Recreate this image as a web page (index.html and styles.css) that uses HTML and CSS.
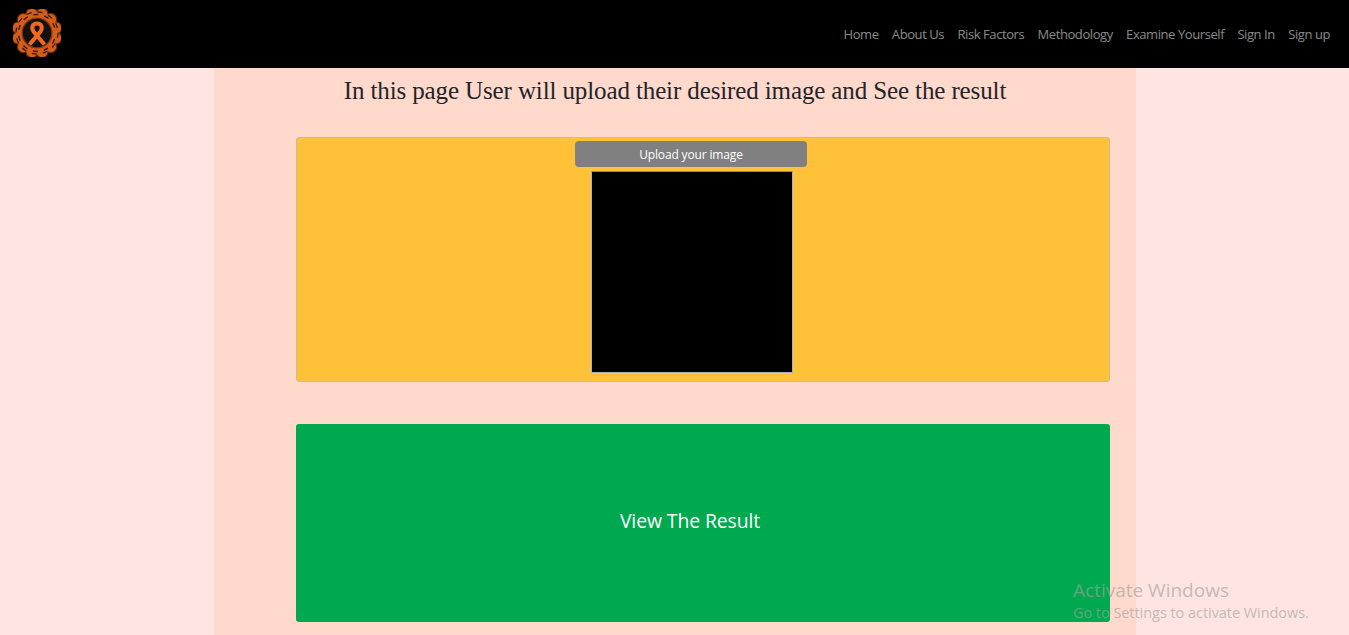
FILE: index.html
```html
<!DOCTYPE html>
<html lang="en">
<head>
<meta charset="utf-8">
<title>Upload</title>
<link rel="stylesheet" href="styles.css">
</head>
<body>
<nav class="navbar">
  <a class="brand" href="#" aria-label="Home">
    <svg class="logo" viewBox="0 0 48 48" width="48" height="48">
      <path d="M46 24A6 6 0 0 1 43.05 35A6 6 0 0 1 35 43.05A6 6 0 0 1 24 46A6 6 0 0 1 13 43.05A6 6 0 0 1 5 35A6 6 0 0 1 2 24A6 6 0 0 1 5 13A6 6 0 0 1 13 5A6 6 0 0 1 24 2A6 6 0 0 1 35 5A6 6 0 0 1 43.05 13A6 6 0 0 1 46 24Z" fill="#d65d19" stroke="#5a2a0c" stroke-width="1.2"/>
      <circle cx="24" cy="24" r="21" fill="none" stroke="#3a1a08" stroke-width="1.3" stroke-dasharray="5 6"/>
      <circle cx="24" cy="24" r="18.5" fill="none" stroke="#3a1a08" stroke-width="1.5" stroke-dasharray="5 6" stroke-dashoffset="5"/>
      <circle cx="24" cy="24" r="15.5" fill="#7a3a10"/>
      <circle cx="24" cy="24" r="14.2" fill="#14100e"/>
      <path d="M16.5 35.5 L27.5 22.5 C30 18.5 28.5 14.5 24 14.5 C19.5 14.5 18 18.5 20.5 22.5 L31.5 35.5" fill="none" stroke="#f26a1b" stroke-width="4"/>
    </svg>
  </a>
  <ul class="nav-links">
    <li><a href="#">Home</a></li>
    <li><a href="#">About Us</a></li>
    <li><a href="#">Risk Factors</a></li>
    <li><a href="#">Methodology</a></li>
    <li><a href="#">Examine Yourself</a></li>
    <li><a href="#">Sign In</a></li>
    <li><a href="#">Sign up</a></li>
  </ul>
</nav>
<main class="container">
  <h1 class="title">In this page User will upload their desired image and See the result</h1>
  <section class="upload-card">
    <button class="upload-btn" type="button">Upload your image</button>
    <div class="preview"></div>
  </section>
  <button class="result-card" type="button">View The Result</button>
</main>
<aside class="activate">
  <div class="activate-title">Activate Windows</div>
  <div class="activate-sub">Go to Settings to activate Windows.</div>
</aside>
</body>
</html>
```
FILE: styles.css
```css
* { box-sizing: border-box; }
html, body { margin: 0; height: 635px; overflow: hidden; }
body {
  background: #ffe4e1;
  font-family: "Open Sans", "Noto Sans", sans-serif;
}
.navbar {
  height: 68px;
  background: #000;
  display: flex;
  align-items: center;
  justify-content: space-between;
  padding: 0 19px 0 13px;
}
.brand { display: flex; }
.logo { display: block; margin-top: -2px; }
.nav-links {
  display: flex;
  gap: 13.3px;
  list-style: none;
  margin: 0 0 2px;
  padding: 0;
}
.nav-links a {
  color: rgba(255, 255, 255, 0.55);
  text-decoration: none;
  font-size: 13px;
  letter-spacing: -0.42px;
  line-height: 20px;
}
.container {
  width: 922px;
  height: 567px;
  padding: 0 26px 0 82px;
  margin-left: 214px;
  background: #ffd9cc;
  display: flex;
  flex-direction: column;
}
.title {
  margin: 8px 0 0 -82px;
  width: 922px;
  height: 61px;
  font-family: "Liberation Serif", serif;
  font-weight: 400;
  font-size: 25px;
  letter-spacing: -0.12px;
  line-height: 30px;
  color: #212529;
  text-align: center;
}
.upload-card {
  height: 245px;
  background: #ffc138;
  border: 1px solid #c9bd9a;
  border-radius: 3px;
  display: flex;
  flex-direction: column;
  align-items: center;
  padding: 3px 24px 0 0;
}
.upload-btn {
  width: 232px;
  height: 26px;
  margin: 0;
  border: 0;
  border-radius: 4px;
  background: #808080;
  color: #fff;
  font-family: inherit;
  font-size: 12px;
  letter-spacing: -0.15px;
  padding: 0;
}
.preview {
  width: 202px;
  height: 202px;
  margin: 4px 0 0 2px;
  background: #000;
  border: 1px solid #b0b4b8;
  border-top-color: #8a8a8a;
}
.result-card {
  width: 814px;
  height: 198px;
  margin: 42px 0 0;
  border: 0;
  border-radius: 3px;
  background: #00a94f;
  color: #fff;
  font-family: inherit;
  font-size: 19.4px;
  letter-spacing: -0.1px;
  padding: 0 26px 5px 0;
}
.activate {
  position: absolute;
  left: 1073px;
  top: 578px;
  color: rgba(160, 160, 160, 0.65);
  font-family: "Open Sans", sans-serif;
  pointer-events: none;
}
.activate-title { font-size: 19px; line-height: 25px; }
.activate-sub { font-size: 14.4px; line-height: 20px; }
```
